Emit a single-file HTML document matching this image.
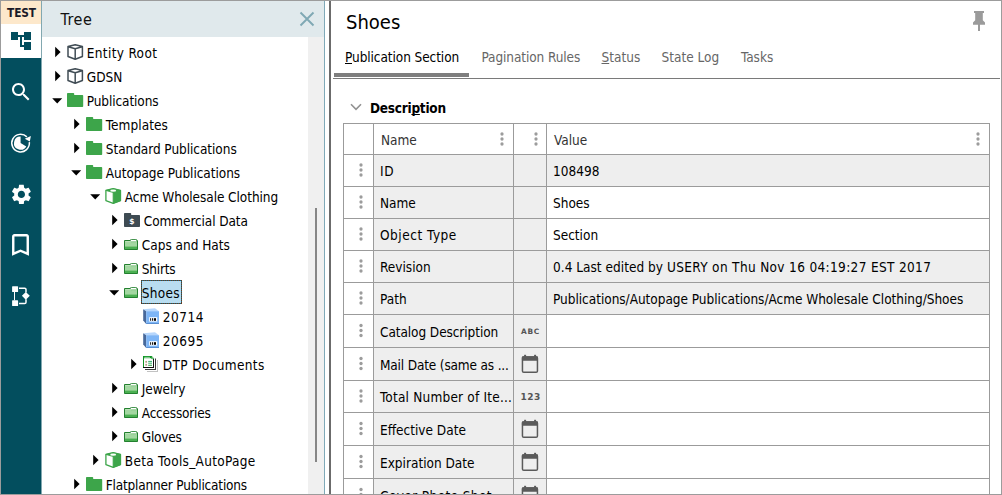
<!DOCTYPE html>
<html lang="en">
<head>
<meta charset="utf-8">
<title>Shoes - Publication Section</title>
<style>
html,body{margin:0;padding:0;}
body{width:1002px;height:495px;overflow:hidden;background:#fff;position:relative;
  font-family:"DejaVu Sans Condensed","Liberation Sans",sans-serif;font-size:13.5px;color:#000;}
*{box-sizing:border-box;}
.abs{position:absolute;}
#frame{position:absolute;left:0;top:0;width:1002px;height:495px;border:1px solid #9c9c9c;pointer-events:none;z-index:50;}
/* sidebar */
#side{position:absolute;left:1px;top:1px;width:40px;height:493px;background:#034e5e;}
#sideedge{position:absolute;left:41px;top:1px;width:1px;height:493px;background:#82a8b0;}
#test{position:absolute;left:0;top:0;width:40px;height:23px;background:#fde8cb;font-weight:bold;font-size:11.8px;line-height:25px;text-align:center;color:#1a1a28;letter-spacing:-0.1px;padding-left:1px;}
#tab1{position:absolute;left:0;top:23px;width:40px;height:34px;background:#fff;}
.sico{position:absolute;left:0;width:40px;}
/* tree panel */
#thead{position:absolute;left:42px;top:1px;width:282px;height:36px;background:#e0e9ec;}
#thead .t{position:absolute;left:18.5px;top:0;line-height:37px;font-size:16px;letter-spacing:0.55px;color:#111;}
#tedge{position:absolute;left:324px;top:1px;width:1px;height:493px;background:#7fa9b8;}
#track{position:absolute;left:308px;top:37px;width:16px;height:457px;background:#f0f0f0;}
#thumb{position:absolute;left:315px;top:208px;width:2px;height:254px;background:#868686;}
#split{position:absolute;left:329px;top:1px;width:2px;height:493px;background:#6b6b6b;}
.row{position:absolute;left:0;width:308px;height:24px;line-height:24px;white-space:nowrap;}
.row .lbl{position:absolute;top:1px;height:24px;line-height:24px;}
.row svg{position:absolute;}
.sel{position:absolute;background:
 repeating-linear-gradient(90deg,#6b3a1e 0 1px,#1a6a85 1px 2px) left top/100% 1px no-repeat,
 repeating-linear-gradient(90deg,#6b3a1e 0 1px,#1a6a85 1px 2px) left bottom/100% 1px no-repeat,
 repeating-linear-gradient(180deg,#6b3a1e 0 1px,#1a6a85 1px 2px) left top/1px 100% no-repeat,
 repeating-linear-gradient(180deg,#6b3a1e 0 1px,#1a6a85 1px 2px) right top/1px 100% no-repeat,
 #b9ddf0;}
/* right */
#title{position:absolute;left:346px;top:9px;font-size:20px;line-height:26px;color:#000;}
.tab{position:absolute;top:48px;line-height:18px;color:#666;white-space:nowrap;}
.tab u,#desc u{text-decoration:underline;text-decoration-thickness:1px;text-underline-offset:0.5px;text-decoration-skip-ink:none;}
#tabind{position:absolute;left:334px;top:73px;width:135px;height:4px;background:#7e7e7e;}
#tabline{position:absolute;left:333px;top:78px;width:667px;height:1px;background:#7a7a7a;}
#desc{position:absolute;left:370px;top:98.7px;line-height:18px;font-weight:bold;color:#000;white-space:nowrap;letter-spacing:-0.25px;}
/* table */
#tbl{position:absolute;left:343px;top:123px;width:647px;height:372px;}
.hl{position:absolute;left:0;width:647px;height:1px;background:#9b9b9b;}
.vl{position:absolute;top:0;width:1px;height:372px;background:#9b9b9b;}
.g{position:absolute;background:#eeeeee;}
.c{position:absolute;white-space:nowrap;line-height:20px;height:20px;}
.hd{color:#333;}
.dots{position:absolute;width:3px;height:13px;}
.dots i{position:absolute;left:0.3px;margin-top:0.3px;width:2.8px;height:2.8px;border-radius:50%;background:#9a9a9a;}
.mini{position:absolute;font-family:"DejaVu Sans","Liberation Sans",sans-serif;font-weight:bold;font-size:8px;line-height:8px;color:#555;white-space:nowrap;}

</style>
</head>
<body>
<div id="side">
  <div id="test">TEST</div>
  <div id="tab1"></div>
</div>
<svg class="abs" style="left:1px;top:24px" width="40" height="34" viewBox="0 0 40 34"><g fill="#034e5e"><rect x="10" y="8" width="7" height="8"/><rect x="23" y="8" width="7" height="8"/><rect x="23" y="18" width="7" height="8"/><rect x="17" y="11" width="6" height="2"/><rect x="19" y="11" width="2" height="12"/><rect x="19" y="21" width="4" height="2"/></g></svg>
<svg class="abs" style="left:9px;top:80px" width="24" height="24" viewBox="0 0 24 24"><path fill="#fff" d="M15.5 14h-.79l-.28-.27C15.41 12.59 16 11.11 16 9.5 16 5.91 13.09 3 9.5 3S3 5.910 3 9.5 5.91 16 9.5 16c1.61 0 3.090-.59 4.23-1.57l.27.28v.79l5 4.99L20.49 19l-4.990-5zm-6 0C7.010 14 5 11.99 5 9.500S7.010 5 9.500 5 14 7.010 14 9.500 11.990 14 9.500 14z"/></svg>
<svg class="abs" style="left:8px;top:131px" width="24" height="24" viewBox="-12.600 -12.100 24 24"><path d="M6.250 -6.200 A8.800 8.800 0 1 0 8.750 -0.900" fill="none" stroke="#fff" stroke-width="1.500"/><path d="M4.200 -4.300 L10.300 -7.100 L9.200 -1.600 Z" fill="#fff"/><path d="M0 0 L0 -6.600 A6.600 6.600 0 1 0 5.700 3.300 Z" fill="#fff"/></svg>
<svg class="abs" style="left:9px;top:182px" width="24" height="24" viewBox="-0.400 -0.450 24 24"><path fill="#fff" d="M19.14,12.94c0.04-0.3,0.06-0.61,0.06-0.94c0-0.32-0.02-0.64-0.07-0.94l2.03-1.580c0.18-0.14,0.23-0.41,0.12-0.61 l-1.92-3.32c-0.12-0.22-0.37-0.29-0.59-0.22l-2.39,0.960c-0.5-0.38-1.03-0.7-1.62-0.94L14.4,2.81c-0.04-0.24-0.24-0.41-0.48-0.41 h-3.840c-0.24,0-0.43,0.17-0.47,0.41L9.25,5.35C8.66,5.590,8.12,5.92,7.63,6.29L5.24,5.33c-0.22-0.08-0.47,0-0.59,0.22L2.740,8.870 C2.62,9.08,2.66,9.34,2.86,9.48l2.03,1.58C4.84,11.36,4.8,11.69,4.8,12s0.02,0.64,0.07,0.940l-2.03,1.58 c-0.18,0.14-0.23,0.41-0.12,0.61l1.92,3.320c0.12,0.22,0.37,0.29,0.59,0.22l2.39-0.96c0.5,0.38,1.03,0.7,1.62,0.940l0.36,2.54 c0.05,0.24,0.24,0.41,0.48,0.41h3.840c0.24,0,0.44-0.17,0.47-0.41l0.36-2.54c0.59-0.24,1.13-0.560,1.62-0.94l2.39,0.96 c0.22,0.08,0.47,0,0.59-0.220l1.92-3.32c0.12-0.22,0.07-0.47-0.12-0.61L19.14,12.940z M12,15.6c-1.98,0-3.6-1.62-3.6-3.6 s1.62-3.6,3.600-3.600s3.6,1.62,3.600,3.600S13.980,15.600,12,15.600z"/></svg>
<svg class="abs" style="left:6px;top:230px" width="29" height="29" viewBox="0 -0.300 24 24"><path fill="#fff" d="M17 3H7c-1.100 0-1.990.9-1.990 2L5 21l7-3 7 3V5c0-1.100-.9-2-2-2zm0 15l-5-2.180L7 18V5h10v13z"/></svg>
<svg class="abs" style="left:8px;top:282px" width="26" height="28" viewBox="8 282 26 28"><g fill="#fff"><rect x="12.100" y="286.200" width="6" height="5.800" rx="0.600"/><rect x="12.100" y="300.300" width="6" height="5.800" rx="0.600"/><path d="M25.800 291.900 L29.800 295.850 L25.800 299.800 L21.900 295.850 Z"/><rect x="14" y="292" width="1" height="8.300"/></g><g fill="none" stroke="#fff"><path d="M19 288.200 H24.700 Q26 288.200 26 289.500 V292.400" stroke-width="1.500"/><path d="M19 303.500 H24.700 Q26 303.500 26 302.200 V299.300" stroke-width="1.500"/></g></svg>
<div id="sideedge"></div>
<div id="thead"><span class="t">Tree</span><svg class="abs" style="left:257px;top:10px" width="16" height="16" viewBox="0 0 16 16"><path d="M1.500 1.500 L14.500 14.500 M14.500 1.500 L1.500 14.500" fill="none" stroke="#7fa8b4" stroke-width="1.900"/></svg></div>
<div id="track"></div>
<div id="thumb"></div>
<div id="tedge"></div>
<div id="split"></div>
<div id="tree">
<div class="row" style="top:40px"><svg style="left:55px;top:6px" width="7" height="12" viewBox="0 0 7 12"><path d="M0.2 0.7 L5.6 6 L0.2 11.3 Z" fill="#000"/></svg><svg style="left:67px;top:4px" width="17" height="17" viewBox="0 0 17 17"><path d="M8.200 0.800 L15.400 2.600 L15.400 12.500 L8.200 15.200 L1 12.500 L1 2.600 Z M1.200 2.700 L8.200 4.700 L15.200 2.700 M8.200 4.700 L8.200 15" fill="none" stroke="#414d55" stroke-width="1.500" stroke-linejoin="round"/></svg><span class="lbl" style="left:86.8px;letter-spacing:0.336px">Entity Root</span></div>
<div class="row" style="top:64px"><svg style="left:55px;top:6px" width="7" height="12" viewBox="0 0 7 12"><path d="M0.2 0.7 L5.6 6 L0.2 11.3 Z" fill="#000"/></svg><svg style="left:67px;top:4px" width="17" height="17" viewBox="0 0 17 17"><path d="M8.200 0.800 L15.400 2.600 L15.400 12.500 L8.200 15.200 L1 12.500 L1 2.600 Z M1.200 2.700 L8.200 4.700 L15.200 2.700 M8.200 4.700 L8.200 15" fill="none" stroke="#414d55" stroke-width="1.500" stroke-linejoin="round"/></svg><span class="lbl" style="left:86.8px;letter-spacing:0.025px">GDSN</span></div>
<div class="row" style="top:88px"><svg style="left:52px;top:9.5px" width="11" height="7" viewBox="0 0 11 7"><path d="M0.2 0.3 L10.2 0.3 L5.2 5.5 Z" fill="#000"/></svg><svg style="left:67px;top:5px" width="17" height="15" viewBox="0 0 17 15"><path d="M0.8 0 H6.4 Q7.2 0 7.2 0.8 V2 H15.4 Q16.2 2 16.2 2.8 V13.2 Q16.2 14 15.4 14 H0.8 Q0 14 0 13.2 V0.8 Q0 0 0.8 0 Z" fill="#3da54a"/></svg><span class="lbl" style="left:86.8px;letter-spacing:-0.108px">Publications</span></div>
<div class="row" style="top:112px"><svg style="left:74px;top:6px" width="7" height="12" viewBox="0 0 7 12"><path d="M0.2 0.7 L5.6 6 L0.2 11.3 Z" fill="#000"/></svg><svg style="left:86px;top:5px" width="17" height="15" viewBox="0 0 17 15"><path d="M0.8 0 H6.4 Q7.2 0 7.2 0.8 V2 H15.4 Q16.2 2 16.2 2.8 V13.2 Q16.2 14 15.4 14 H0.8 Q0 14 0 13.2 V0.8 Q0 0 0.8 0 Z" fill="#3da54a"/></svg><span class="lbl" style="left:105.8px;letter-spacing:0.078px">Templates</span></div>
<div class="row" style="top:136px"><svg style="left:74px;top:6px" width="7" height="12" viewBox="0 0 7 12"><path d="M0.2 0.7 L5.6 6 L0.2 11.3 Z" fill="#000"/></svg><svg style="left:86px;top:5px" width="17" height="15" viewBox="0 0 17 15"><path d="M0.8 0 H6.4 Q7.2 0 7.2 0.8 V2 H15.4 Q16.2 2 16.2 2.8 V13.2 Q16.2 14 15.4 14 H0.8 Q0 14 0 13.2 V0.8 Q0 0 0.8 0 Z" fill="#3da54a"/></svg><span class="lbl" style="left:105.8px;letter-spacing:-0.057px">Standard Publications</span></div>
<div class="row" style="top:160px"><svg style="left:71px;top:9.5px" width="11" height="7" viewBox="0 0 11 7"><path d="M0.2 0.3 L10.2 0.3 L5.2 5.5 Z" fill="#000"/></svg><svg style="left:86px;top:5px" width="17" height="15" viewBox="0 0 17 15"><path d="M0.8 0 H6.4 Q7.2 0 7.2 0.8 V2 H15.4 Q16.2 2 16.2 2.8 V13.2 Q16.2 14 15.4 14 H0.8 Q0 14 0 13.2 V0.8 Q0 0 0.8 0 Z" fill="#3da54a"/></svg><span class="lbl" style="left:105.8px;letter-spacing:-0.052px">Autopage Publications</span></div>
<div class="row" style="top:184px"><svg style="left:90px;top:9.5px" width="11" height="7" viewBox="0 0 11 7"><path d="M0.2 0.3 L10.2 0.3 L5.2 5.5 Z" fill="#000"/></svg><svg style="left:105px;top:4px" width="17" height="17" viewBox="0 0 17 17"><path d="M8.200 0.700 L15.500 2.500 L15.500 12.600 L8.200 15.300 L0.900 12.600 L0.900 2.500 Z" fill="#fff" stroke="#3da54a" stroke-width="1.300" stroke-linejoin="round"/><path d="M8.200 4.700 L15.500 2.500 L15.500 12.600 L8.200 15.300 Z" fill="#3da54a" stroke="#3da54a" stroke-width="1" stroke-linejoin="round"/><path d="M0.900 2.500 L8.200 0.700 L15.500 2.500 L8.200 4.500 Z" fill="#3da54a" stroke="#3da54a" stroke-width="0.800" stroke-linejoin="round"/><ellipse cx="8.200" cy="2.700" rx="3" ry="1.100" fill="#fbfffb"/></svg><span class="lbl" style="left:124.8px;letter-spacing:-0.07px">Acme Wholesale Clothing</span></div>
<div class="row" style="top:208px"><svg style="left:112px;top:6px" width="7" height="12" viewBox="0 0 7 12"><path d="M0.2 0.7 L5.6 6 L0.2 11.3 Z" fill="#000"/></svg><svg style="left:124px;top:5px" width="17" height="15" viewBox="0 0 17 15"><path d="M0.8 0 H6.4 Q7.2 0 7.2 0.8 V2 H15.2 Q16 2 16 2.8 V13.2 Q16 14 15.2 14 H0.8 Q0 14 0 13.2 V0.8 Q0 0 0.8 0 Z" fill="#3e4b53"/><text x="8" y="11.200" text-anchor="middle" font-family="DejaVu Sans,Liberation Sans,sans-serif" font-weight="bold" font-size="7.600" fill="#fff">$</text></svg><span class="lbl" style="left:143.8px;letter-spacing:-0.093px">Commercial Data</span></div>
<div class="row" style="top:232px"><svg style="left:112px;top:6px" width="7" height="12" viewBox="0 0 7 12"><path d="M0.2 0.7 L5.6 6 L0.2 11.3 Z" fill="#000"/></svg><svg style="left:124px;top:7px" width="15" height="12" viewBox="0 0 15 12"><rect x="0.500" y="1.500" width="13" height="9" fill="#a3d7a1"/><rect x="0.500" y="7.600" width="13" height="2.900" fill="#4bb052"/><rect x="6.300" y="0.450" width="6.600" height="2.100" rx="1.050" fill="#fff" stroke="#23802f" stroke-width="0.900"/><path d="M6 1.500 H0.500 V10.500 H13.500 V1.800 L12.900 1.300" fill="none" stroke="#23802f" stroke-width="1" stroke-linejoin="round"/><rect x="1.300" y="2.200" width="11.400" height="0.800" fill="#c2e6c0"/></svg><span class="lbl" style="left:141.8px;letter-spacing:-0.015px">Caps and Hats</span></div>
<div class="row" style="top:256px"><svg style="left:112px;top:6px" width="7" height="12" viewBox="0 0 7 12"><path d="M0.2 0.7 L5.6 6 L0.2 11.3 Z" fill="#000"/></svg><svg style="left:124px;top:7px" width="15" height="12" viewBox="0 0 15 12"><rect x="0.500" y="1.500" width="13" height="9" fill="#a3d7a1"/><rect x="0.500" y="7.600" width="13" height="2.900" fill="#4bb052"/><rect x="6.300" y="0.450" width="6.600" height="2.100" rx="1.050" fill="#fff" stroke="#23802f" stroke-width="0.900"/><path d="M6 1.500 H0.500 V10.500 H13.500 V1.800 L12.900 1.300" fill="none" stroke="#23802f" stroke-width="1" stroke-linejoin="round"/><rect x="1.300" y="2.200" width="11.400" height="0.800" fill="#c2e6c0"/></svg><span class="lbl" style="left:141.8px;letter-spacing:-0.2px">Shirts</span></div>
<div class="row" style="top:280px"><svg style="left:109px;top:9.5px" width="11" height="7" viewBox="0 0 11 7"><path d="M0.2 0.3 L10.2 0.3 L5.2 5.5 Z" fill="#000"/></svg><svg style="left:124px;top:7px" width="15" height="12" viewBox="0 0 15 12"><rect x="0.500" y="1.500" width="13" height="9" fill="#a3d7a1"/><rect x="0.500" y="7.600" width="13" height="2.900" fill="#4bb052"/><rect x="6.300" y="0.450" width="6.600" height="2.100" rx="1.050" fill="#fff" stroke="#23802f" stroke-width="0.900"/><path d="M6 1.500 H0.500 V10.500 H13.500 V1.800 L12.900 1.300" fill="none" stroke="#23802f" stroke-width="1" stroke-linejoin="round"/><rect x="1.300" y="2.200" width="11.400" height="0.800" fill="#c2e6c0"/></svg><span class="sel" style="left:140.5px;top:0;width:41px;height:24px"></span><span class="lbl" style="left:141.8px;letter-spacing:0.3px">Shoes</span></div>
<div class="row" style="top:304px"><svg style="left:143px;top:4px" width="17" height="17" viewBox="0 0 17 17"><path d="M0.200 1.200 L12 0.200 L16 3.300 L3.200 3.300 Z" fill="#b6d6fc"/><path d="M0.2 1.2 L3.2 3.2 L3.2 16 L0.2 12.6 Z" fill="#47689a"/><rect x="3.2" y="3.2" width="12.8" height="12.8" fill="#7db5f6"/><rect x="3.2" y="15" width="12.8" height="1" fill="#5a8fd2"/><rect x="6.2" y="9.2" width="8" height="4.4" fill="#fff"/><rect x="7.2" y="10.2" width="0.9" height="2.6" fill="#000"/><rect x="9" y="10.2" width="0.9" height="2.6" fill="#000"/><rect x="10.8" y="10.2" width="2.2" height="2.6" fill="#000"/></svg><span class="lbl" style="left:162.8px;letter-spacing:0.52px">20714</span></div>
<div class="row" style="top:328px"><svg style="left:143px;top:4px" width="17" height="17" viewBox="0 0 17 17"><path d="M0.200 1.200 L12 0.200 L16 3.300 L3.200 3.300 Z" fill="#b6d6fc"/><path d="M0.2 1.2 L3.2 3.2 L3.2 16 L0.2 12.6 Z" fill="#47689a"/><rect x="3.2" y="3.2" width="12.8" height="12.8" fill="#7db5f6"/><rect x="3.2" y="15" width="12.8" height="1" fill="#5a8fd2"/><rect x="6.2" y="9.2" width="8" height="4.4" fill="#fff"/><rect x="7.2" y="10.2" width="0.9" height="2.6" fill="#000"/><rect x="9" y="10.2" width="0.9" height="2.6" fill="#000"/><rect x="10.8" y="10.2" width="2.2" height="2.6" fill="#000"/></svg><span class="lbl" style="left:162.8px;letter-spacing:0.52px">20695</span></div>
<div class="row" style="top:352px"><svg style="left:131px;top:6px" width="7" height="12" viewBox="0 0 7 12"><path d="M0.2 0.7 L5.6 6 L0.2 11.3 Z" fill="#000"/></svg><svg style="left:143px;top:4px" width="17" height="17" viewBox="0 0 17 17"><rect x="4" y="4" width="11" height="12" fill="#fff"/><rect x="14" y="4" width="1" height="12" fill="#c2c2c2"/><rect x="4" y="15" width="11" height="1" fill="#c2c2c2"/><rect x="2" y="2" width="11" height="12" fill="#fff"/><rect x="12" y="2.500" width="1" height="11.500" fill="#3c3c3c"/><rect x="2" y="13" width="11" height="1" fill="#3c3c3c"/><rect x="0" y="0" width="11" height="12" fill="#fff"/><rect x="0" y="0" width="9" height="2.200" fill="#0f9424"/><rect x="0" y="0" width="1" height="12" fill="#0f9424"/><rect x="10" y="2.800" width="1" height="9.200" fill="#111"/><rect x="0" y="11" width="11" height="1" fill="#111"/><path d="M8.600 0.200 L10.800 2.700 H8.600 Z" fill="#fff" stroke="#0f9424" stroke-width="0.700"/><rect x="1.300" y="0.900" width="5.600" height="0.700" fill="#d5efd8"/><rect x="2.200" y="4.800" width="1.900" height="2" fill="#f7b3b3"/><rect x="2.700" y="5.400" width="0.900" height="0.900" fill="#0f9424"/><rect x="2.200" y="7.800" width="1.900" height="2" fill="#f7b3b3"/><rect x="2.700" y="8.400" width="0.900" height="0.900" fill="#0f9424"/><rect x="5.200" y="4.900" width="3.800" height="0.900" fill="#18a558"/><rect x="5.200" y="6.700" width="3.800" height="0.900" fill="#18a558"/><rect x="5.200" y="8.800" width="3.800" height="0.900" fill="#0b8f1f"/></svg><span class="lbl" style="left:162.8px;letter-spacing:0.354px">DTP Documents</span></div>
<div class="row" style="top:376px"><svg style="left:112px;top:6px" width="7" height="12" viewBox="0 0 7 12"><path d="M0.2 0.7 L5.6 6 L0.2 11.3 Z" fill="#000"/></svg><svg style="left:124px;top:7px" width="15" height="12" viewBox="0 0 15 12"><rect x="0.500" y="1.500" width="13" height="9" fill="#a3d7a1"/><rect x="0.500" y="7.600" width="13" height="2.900" fill="#4bb052"/><rect x="6.300" y="0.450" width="6.600" height="2.100" rx="1.050" fill="#fff" stroke="#23802f" stroke-width="0.900"/><path d="M6 1.500 H0.500 V10.500 H13.500 V1.800 L12.900 1.300" fill="none" stroke="#23802f" stroke-width="1" stroke-linejoin="round"/><rect x="1.300" y="2.200" width="11.400" height="0.800" fill="#c2e6c0"/></svg><span class="lbl" style="left:141.8px;letter-spacing:-0.071px">Jewelry</span></div>
<div class="row" style="top:400px"><svg style="left:112px;top:6px" width="7" height="12" viewBox="0 0 7 12"><path d="M0.2 0.7 L5.6 6 L0.2 11.3 Z" fill="#000"/></svg><svg style="left:124px;top:7px" width="15" height="12" viewBox="0 0 15 12"><rect x="0.500" y="1.500" width="13" height="9" fill="#a3d7a1"/><rect x="0.500" y="7.600" width="13" height="2.900" fill="#4bb052"/><rect x="6.300" y="0.450" width="6.600" height="2.100" rx="1.050" fill="#fff" stroke="#23802f" stroke-width="0.900"/><path d="M6 1.500 H0.500 V10.500 H13.500 V1.800 L12.900 1.300" fill="none" stroke="#23802f" stroke-width="1" stroke-linejoin="round"/><rect x="1.300" y="2.200" width="11.400" height="0.800" fill="#c2e6c0"/></svg><span class="lbl" style="left:141.8px;letter-spacing:-0.209px">Accessories</span></div>
<div class="row" style="top:424px"><svg style="left:112px;top:6px" width="7" height="12" viewBox="0 0 7 12"><path d="M0.2 0.7 L5.6 6 L0.2 11.3 Z" fill="#000"/></svg><svg style="left:124px;top:7px" width="15" height="12" viewBox="0 0 15 12"><rect x="0.500" y="1.500" width="13" height="9" fill="#a3d7a1"/><rect x="0.500" y="7.600" width="13" height="2.900" fill="#4bb052"/><rect x="6.300" y="0.450" width="6.600" height="2.100" rx="1.050" fill="#fff" stroke="#23802f" stroke-width="0.900"/><path d="M6 1.500 H0.500 V10.500 H13.500 V1.800 L12.900 1.300" fill="none" stroke="#23802f" stroke-width="1" stroke-linejoin="round"/><rect x="1.300" y="2.200" width="11.400" height="0.800" fill="#c2e6c0"/></svg><span class="lbl" style="left:141.8px;letter-spacing:-0.233px">Gloves</span></div>
<div class="row" style="top:448px"><svg style="left:93px;top:6px" width="7" height="12" viewBox="0 0 7 12"><path d="M0.2 0.7 L5.6 6 L0.2 11.3 Z" fill="#000"/></svg><svg style="left:105px;top:4px" width="17" height="17" viewBox="0 0 17 17"><path d="M8.200 0.700 L15.500 2.500 L15.500 12.600 L8.200 15.300 L0.900 12.600 L0.900 2.500 Z" fill="#fff" stroke="#3da54a" stroke-width="1.300" stroke-linejoin="round"/><path d="M8.200 4.700 L15.500 2.500 L15.500 12.600 L8.200 15.300 Z" fill="#3da54a" stroke="#3da54a" stroke-width="1" stroke-linejoin="round"/><path d="M0.900 2.500 L8.200 0.700 L15.500 2.500 L8.200 4.500 Z" fill="#3da54a" stroke="#3da54a" stroke-width="0.800" stroke-linejoin="round"/><ellipse cx="8.200" cy="2.700" rx="3" ry="1.100" fill="#fbfffb"/></svg><span class="lbl" style="left:124.8px;letter-spacing:0.289px">Beta Tools_AutoPage</span></div>
<div class="row" style="top:472px"><svg style="left:74px;top:6px" width="7" height="12" viewBox="0 0 7 12"><path d="M0.2 0.7 L5.6 6 L0.2 11.3 Z" fill="#000"/></svg><svg style="left:86px;top:5px" width="17" height="15" viewBox="0 0 17 15"><path d="M0.8 0 H6.4 Q7.2 0 7.2 0.8 V2 H15.4 Q16.2 2 16.2 2.8 V13.2 Q16.2 14 15.4 14 H0.8 Q0 14 0 13.2 V0.8 Q0 0 0.8 0 Z" fill="#3da54a"/></svg><span class="lbl" style="left:105.8px;letter-spacing:-0.192px">Flatplanner Publications</span></div>
</div>
<div id="right">
  <div id="title">Shoes</div>
  <svg class="abs" style="left:972px;top:10px" width="14" height="22" viewBox="972 10 14 22"><path d="M974 11 H984 V13 H982.800 V20.300 L985 22.600 V24.800 H980 V31 H978 V24.800 H973 V22.600 L975.200 20.300 V13 H974 Z" fill="#9b9b9b"/></svg>
  <div class="tab" style="left:345px;color:#000;letter-spacing:-0.08px;"><u>P</u>ublication Section</div>
  <div class="tab" style="left:481.5px;letter-spacing:-0.1px;">Pagination Rules</div>
  <div class="tab" style="left:601.5px;"><u>S</u>tatus</div>
  <div class="tab" style="left:661.5px;">State Log</div>
  <div class="tab" style="left:741px;">Tasks</div>
  <div id="tabind"></div>
  <div id="tabline"></div>
  <svg class="abs" style="left:349px;top:102px" width="14" height="10" viewBox="0 0 14 10"><path d="M2 2.200 L7 7.400 L12 2.200" fill="none" stroke="#929292" stroke-width="1.600"/></svg>
  <div id="desc">Descri<u>p</u>tion</div>
  <div id="tbl">
<div class="g" style="left:31px;top:32px;width:172px;height:31px"></div>
<div class="g" style="left:204px;top:32px;width:442px;height:31px"></div>
<div class="g" style="left:31px;top:64px;width:172px;height:31px"></div>
<div class="g" style="left:31px;top:96px;width:172px;height:31px"></div>
<div class="g" style="left:31px;top:128px;width:172px;height:31px"></div>
<div class="g" style="left:204px;top:128px;width:442px;height:31px"></div>
<div class="g" style="left:31px;top:160px;width:172px;height:31px"></div>
<div class="g" style="left:204px;top:160px;width:442px;height:31px"></div>
<div class="g" style="left:31px;top:192px;width:172px;height:32px"></div>
<div class="g" style="left:31px;top:225px;width:172px;height:32px"></div>
<div class="g" style="left:31px;top:258px;width:172px;height:31px"></div>
<div class="g" style="left:31px;top:290px;width:172px;height:32px"></div>
<div class="g" style="left:31px;top:323px;width:172px;height:32px"></div>
<div class="g" style="left:31px;top:356px;width:172px;height:16px"></div>
<div class="hl" style="top:0px"></div>
<div class="hl" style="top:31px"></div>
<div class="hl" style="top:63px"></div>
<div class="hl" style="top:95px"></div>
<div class="hl" style="top:127px"></div>
<div class="hl" style="top:159px"></div>
<div class="hl" style="top:191px"></div>
<div class="hl" style="top:224px"></div>
<div class="hl" style="top:257px"></div>
<div class="hl" style="top:289px"></div>
<div class="hl" style="top:322px"></div>
<div class="hl" style="top:355px"></div>
<div class="vl" style="left:0px"></div>
<div class="vl" style="left:30px"></div>
<div class="vl" style="left:170px"></div>
<div class="vl" style="left:203px"></div>
<div class="vl" style="left:646px"></div>
<div class="c hd" style="left:38px;top:7px">Name</div>
<div class="c hd" style="left:211px;top:7px">Value</div>
<svg class="abs" style="left:156px;top:8px" width="7" height="17" viewBox="0 0 7 17"><g fill="#9c9c9c"><circle cx="3.00" cy="3.00" r="1.650"/><circle cx="3.00" cy="8.00" r="1.650"/><circle cx="3.00" cy="13.00" r="1.650"/></g></svg>
<svg class="abs" style="left:190px;top:8px" width="7" height="17" viewBox="0 0 7 17"><g fill="#9c9c9c"><circle cx="3.00" cy="3.00" r="1.650"/><circle cx="3.00" cy="8.00" r="1.650"/><circle cx="3.00" cy="13.00" r="1.650"/></g></svg>
<svg class="abs" style="left:632px;top:8px" width="7" height="17" viewBox="0 0 7 17"><g fill="#9c9c9c"><circle cx="3.00" cy="3.00" r="1.650"/><circle cx="3.00" cy="8.00" r="1.650"/><circle cx="3.00" cy="13.00" r="1.650"/></g></svg>
<svg class="abs" style="left:15px;top:39px" width="7" height="17" viewBox="0 0 7 17"><g fill="#9c9c9c"><circle cx="3.00" cy="3.00" r="1.650"/><circle cx="3.00" cy="8.00" r="1.650"/><circle cx="3.00" cy="13.00" r="1.650"/></g></svg>
<div class="c" style="left:37px;top:38.0px;letter-spacing:0.7px">ID</div>
<div class="c" style="left:210px;top:38.0px">108498</div>
<svg class="abs" style="left:15px;top:71px" width="7" height="17" viewBox="0 0 7 17"><g fill="#9c9c9c"><circle cx="3.00" cy="3.00" r="1.650"/><circle cx="3.00" cy="8.00" r="1.650"/><circle cx="3.00" cy="13.00" r="1.650"/></g></svg>
<div class="c" style="left:37px;top:70.0px">Name</div>
<div class="c" style="left:210px;top:70.0px">Shoes</div>
<svg class="abs" style="left:15px;top:103px" width="7" height="17" viewBox="0 0 7 17"><g fill="#9c9c9c"><circle cx="3.00" cy="3.00" r="1.650"/><circle cx="3.00" cy="8.00" r="1.650"/><circle cx="3.00" cy="13.00" r="1.650"/></g></svg>
<div class="c" style="left:37px;top:102.0px;letter-spacing:0.52px">Object Type</div>
<div class="c" style="left:210px;top:102.0px">Section</div>
<svg class="abs" style="left:15px;top:135px" width="7" height="17" viewBox="0 0 7 17"><g fill="#9c9c9c"><circle cx="3.00" cy="3.00" r="1.650"/><circle cx="3.00" cy="8.00" r="1.650"/><circle cx="3.00" cy="13.00" r="1.650"/></g></svg>
<div class="c" style="left:37px;top:134.0px">Revision</div>
<div class="c" style="left:210px;top:134.0px"><span style="letter-spacing:0.025px">0.4 Last edited by </span><span style="letter-spacing:0.343px">USERY on Thu Nov 16 04:19:27 EST 2017</span></div>
<svg class="abs" style="left:15px;top:167px" width="7" height="17" viewBox="0 0 7 17"><g fill="#9c9c9c"><circle cx="3.00" cy="3.00" r="1.650"/><circle cx="3.00" cy="8.00" r="1.650"/><circle cx="3.00" cy="13.00" r="1.650"/></g></svg>
<div class="c" style="left:37px;top:166.0px">Path</div>
<div class="c" style="left:210px;top:166.0px;letter-spacing:-0.03px">Publications/Autopage Publications/Acme Wholesale Clothing/Shoes</div>
<svg class="abs" style="left:15px;top:199px" width="7" height="17" viewBox="0 0 7 17"><g fill="#9c9c9c"><circle cx="3.00" cy="3.50" r="1.650"/><circle cx="3.00" cy="8.50" r="1.650"/><circle cx="3.00" cy="13.50" r="1.650"/></g></svg>
<div class="c" style="left:37px;top:198.5px;letter-spacing:-0.08px">Catalog Description</div>
<div class="mini" style="left:178px;top:204.5px;font-size:7.400px;letter-spacing:0.700px">ABC</div>
<svg class="abs" style="left:15px;top:232px" width="7" height="17" viewBox="0 0 7 17"><g fill="#9c9c9c"><circle cx="3.00" cy="3.50" r="1.650"/><circle cx="3.00" cy="8.50" r="1.650"/><circle cx="3.00" cy="13.50" r="1.650"/></g></svg>
<div class="c" style="left:37px;top:231.5px;letter-spacing:-0.16px">Mail Date (same as ...</div>
<svg class="abs" style="left:178px;top:231px" width="18" height="20" viewBox="0 0 18 20"><rect x="1.450" y="2.950" width="15" height="15.300" rx="1.300" fill="none" stroke="#5a5a5a" stroke-width="1.500"/><rect x="0.900" y="2.200" width="16.100" height="4.500" rx="1" fill="#5a5a5a"/><rect x="3.100" y="0.800" width="2" height="2" fill="#5a5a5a"/><rect x="13.100" y="0.800" width="2" height="2" fill="#5a5a5a"/></svg>
<svg class="abs" style="left:15px;top:265px" width="7" height="17" viewBox="0 0 7 17"><g fill="#9c9c9c"><circle cx="3.00" cy="3.00" r="1.650"/><circle cx="3.00" cy="8.00" r="1.650"/><circle cx="3.00" cy="13.00" r="1.650"/></g></svg>
<div class="c" style="left:37px;top:264.0px;letter-spacing:0.21px">Total Number of Ite...</div>
<div class="mini" style="left:177.500px;top:270.0px;font-size:9px;letter-spacing:0.500px">123</div>
<svg class="abs" style="left:15px;top:297px" width="7" height="17" viewBox="0 0 7 17"><g fill="#9c9c9c"><circle cx="3.00" cy="3.50" r="1.650"/><circle cx="3.00" cy="8.50" r="1.650"/><circle cx="3.00" cy="13.50" r="1.650"/></g></svg>
<div class="c" style="left:37px;top:296.5px">Effective Date</div>
<svg class="abs" style="left:178px;top:296px" width="18" height="20" viewBox="0 0 18 20"><rect x="1.450" y="2.950" width="15" height="15.300" rx="1.300" fill="none" stroke="#5a5a5a" stroke-width="1.500"/><rect x="0.900" y="2.200" width="16.100" height="4.500" rx="1" fill="#5a5a5a"/><rect x="3.100" y="0.800" width="2" height="2" fill="#5a5a5a"/><rect x="13.100" y="0.800" width="2" height="2" fill="#5a5a5a"/></svg>
<svg class="abs" style="left:15px;top:330px" width="7" height="17" viewBox="0 0 7 17"><g fill="#9c9c9c"><circle cx="3.00" cy="3.50" r="1.650"/><circle cx="3.00" cy="8.50" r="1.650"/><circle cx="3.00" cy="13.50" r="1.650"/></g></svg>
<div class="c" style="left:37px;top:329.5px">Expiration Date</div>
<svg class="abs" style="left:178px;top:329px" width="18" height="20" viewBox="0 0 18 20"><rect x="1.450" y="2.950" width="15" height="15.300" rx="1.300" fill="none" stroke="#5a5a5a" stroke-width="1.500"/><rect x="0.900" y="2.200" width="16.100" height="4.500" rx="1" fill="#5a5a5a"/><rect x="3.100" y="0.800" width="2" height="2" fill="#5a5a5a"/><rect x="13.100" y="0.800" width="2" height="2" fill="#5a5a5a"/></svg>
<svg class="abs" style="left:15px;top:363px" width="7" height="17" viewBox="0 0 7 17"><g fill="#9c9c9c"><circle cx="3.00" cy="3.50" r="1.650"/><circle cx="3.00" cy="8.50" r="1.650"/><circle cx="3.00" cy="13.50" r="1.650"/></g></svg>
<div class="c" style="left:37px;top:362.5px;letter-spacing:0.4px">Cover Photo Shot</div>
<svg class="abs" style="left:178px;top:362px" width="18" height="20" viewBox="0 0 18 20"><rect x="1.450" y="2.950" width="15" height="15.300" rx="1.300" fill="none" stroke="#5a5a5a" stroke-width="1.500"/><rect x="0.900" y="2.200" width="16.100" height="4.500" rx="1" fill="#5a5a5a"/><rect x="3.100" y="0.800" width="2" height="2" fill="#5a5a5a"/><rect x="13.100" y="0.800" width="2" height="2" fill="#5a5a5a"/></svg>
</div>
</div>
<div id="frame"></div>
</body>
</html>
